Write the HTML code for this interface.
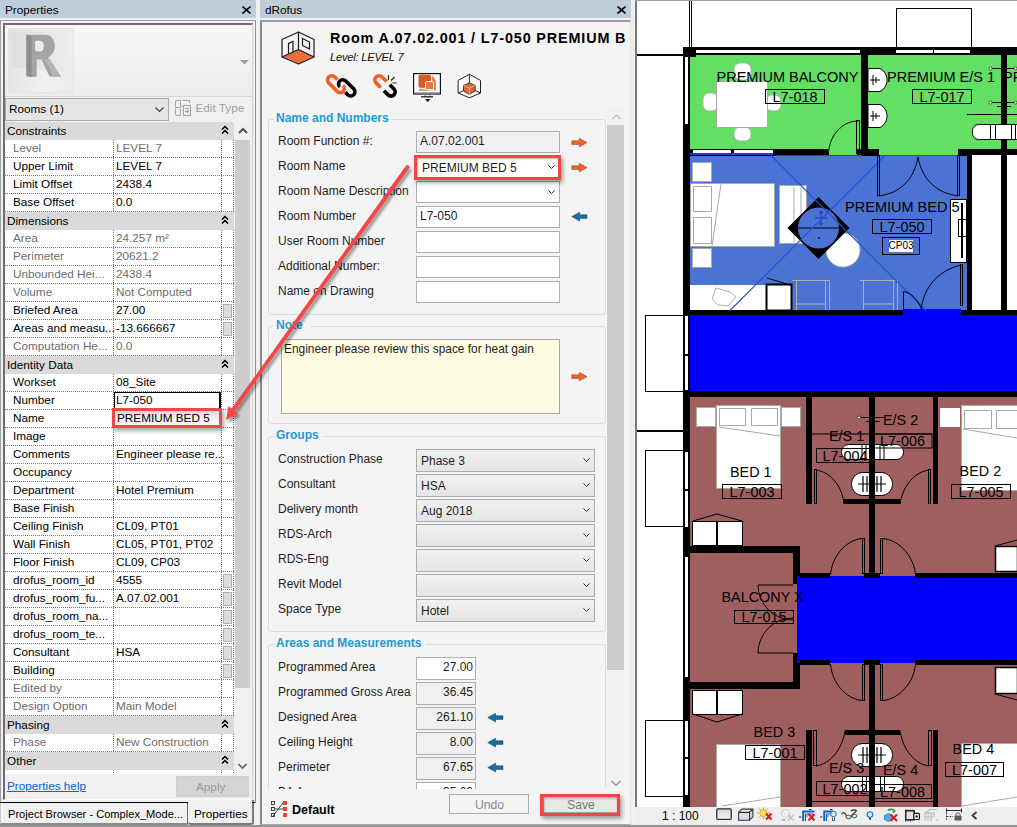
<!DOCTYPE html><html><head><meta charset="utf-8"><style>
html,body{margin:0;padding:0;}
body{width:1017px;height:827px;position:relative;overflow:hidden;background:#f0f0f0;font-family:"Liberation Sans",sans-serif;font-size:11.75px;color:#000;}
.t{position:absolute;white-space:nowrap;line-height:14px;}
.tbar{position:absolute;height:18px;background:#bfcddb;}
.ttl{position:absolute;top:3px;white-space:nowrap;line-height:14px;font-size:11.75px;color:#000;}
.row{position:absolute;left:5px;width:229px;height:18px;background:#fff;
 background-image:
  linear-gradient(to right,#7a7a7a 50%,transparent 50%),
  linear-gradient(to bottom,#7a7a7a 50%,transparent 50%),
  linear-gradient(to bottom,#7a7a7a 50%,transparent 50%),
  linear-gradient(to bottom,#7a7a7a 50%,transparent 50%);
 background-size:2px 1px,1px 2px,1px 2px,1px 2px;
 background-repeat:repeat-x,repeat-y,repeat-y,repeat-y;
 background-position:0 17px,108px 0,216px 0,228px 0;}
</style></head><body>
<div class="tbar" style="left:0;top:0;width:256px;"><span class="ttl" style="left:5px">Properties</span><svg style="position:absolute;left:242px;top:6px" width="9" height="8" viewBox="0 0 9 8"><path d="M0.5 0.5L8.5 7.5M8.5 0.5L0.5 7.5" stroke="#000" stroke-width="1.6"/></svg></div>
<div style="position:absolute;left:0;top:20px;width:256px;height:783px;border-top:1px solid #a0a0a0;border-left:1px solid #a0a0a0;border-right:1px solid #909090;box-sizing:border-box;background:#f0f0f0"></div>
<div style="position:absolute;left:3px;top:23px;width:250px;height:777px;border-top:2px solid #6e6e6e;border-left:2px solid #6e6e6e;border-right:1px solid #d4d4d4;border-bottom:1px solid #fafafa;box-sizing:border-box;background:#f0f0f0"></div>
<div style="position:absolute;left:5px;top:25px;width:247px;height:71px;background:linear-gradient(#f7f7f7,#ececec);border-bottom:1px solid #d6d6d6"></div>
<div style="position:absolute;left:8px;top:28px;width:66px;height:65px;background:linear-gradient(100deg,#e2e2e2,#f0f0f0 60%,#ebebeb);border:1px solid #e4e4e4;box-sizing:border-box"></div>
<svg style="position:absolute;left:0;top:0" width="80" height="96" viewBox="0 0 80 96"><defs><linearGradient id="rg" x1="0" y1="0" x2="1" y2="0"><stop offset="0" stop-color="#dedede"/><stop offset="1" stop-color="#ececec"/></linearGradient></defs><path d="M11.6 32H69.5V72.7L11.6 67Z" fill="url(#rg)"/><path d="M26.4 34.8H45.5C51 34.8 54.8 39.5 54.8 46.4C54.8 51.5 51.5 55.5 48 57.5L61 76.5H49.5L41.5 59.5H36.7V76.7L31.5 77L26.4 76Z" fill="#a4a4a4"/><path d="M26.4 34.8L31.5 36V77L26.4 76Z" fill="#8c8c8c"/><path d="M35.1 41.5C36 40.8 38 40.8 40 40.8C42.5 40.8 43.8 43 43.8 46C43.8 49.5 42.5 51.5 40 51.5C37.5 51.5 35.5 51 35.1 50Z" fill="#ededed"/><path d="M41.5 59.5C45 60 47 63 49.5 68L53 76.5H61L50 59.5" fill="#b4b4b4"/></svg>
<svg style="position:absolute;left:240px;top:60px" width="10" height="5"><path d="M0 0H9L4.5 4.5Z" fill="#9a9a9a"/></svg>
<div style="position:absolute;left:5px;top:98px;width:164px;height:23px;background:#e5e5e5;border:1px solid #acacac;box-sizing:border-box"></div>
<span class="t" style="left:9px;top:102px">Rooms (1)</span>
<svg style="position:absolute;left:155px;top:107px" width="9" height="6"><path d="M0.5 0.5L4.5 4.5L8.5 0.5" stroke="#404040" fill="none" stroke-width="1.1"/></svg>
<svg style="position:absolute;left:174px;top:99px" width="18" height="18" viewBox="0 0 18 18"><g fill="none" stroke="#a6a6a6" stroke-width="1.1"><path d="M6 1.5H3C2 1.5 1.5 2 1.5 3V8.5M6.5 1.5V7.5M1.5 9.5V15C1.5 16 2 16.5 3 16.5H6.5M6.5 9.5V16M8.5 1.5H15.5V4M8.5 7.5H6.5M1.5 8.5H6.5"/><rect x="9.5" y="6.5" width="7" height="10"/><path d="M11 9.5H15M11 12.5H14M13 11L14.5 12.5L13 14"/></g></svg>
<span class="t" style="left:195.5px;top:101px;color:#a0a0a0">Edit Type</span>
<div style="position:absolute;left:5px;top:122px;width:229px;height:18px;background:#dadada"></div>
<span class="t" style="left:7px;top:124px">Constraints</span>
<svg style="position:absolute;left:221px;top:125px" width="8" height="10" viewBox="0 0 8 10"><path d="M1 4.5L4 1.5L7 4.5M1 8.5L4 5.5L7 8.5" stroke="#000" stroke-width="1.5" fill="none"/></svg>
<div class="row" style="top:140px"></div>
<span class="t" style="left:13px;top:141px;color:#6d6d6d">Level</span>
<span class="t" style="left:116px;top:141px;color:#6d6d6d">LEVEL 7</span>
<div class="row" style="top:158px"></div>
<span class="t" style="left:13px;top:159px;color:#000">Upper Limit</span>
<span class="t" style="left:116px;top:159px;color:#000">LEVEL 7</span>
<div class="row" style="top:176px"></div>
<span class="t" style="left:13px;top:177px;color:#000">Limit Offset</span>
<span class="t" style="left:116px;top:177px;color:#000">2438.4</span>
<div class="row" style="top:194px"></div>
<span class="t" style="left:13px;top:195px;color:#000">Base Offset</span>
<span class="t" style="left:116px;top:195px;color:#000">0.0</span>
<div style="position:absolute;left:5px;top:212px;width:229px;height:18px;background:#dadada"></div>
<span class="t" style="left:7px;top:214px">Dimensions</span>
<svg style="position:absolute;left:221px;top:215px" width="8" height="10" viewBox="0 0 8 10"><path d="M1 4.5L4 1.5L7 4.5M1 8.5L4 5.5L7 8.5" stroke="#000" stroke-width="1.5" fill="none"/></svg>
<div class="row" style="top:230px"></div>
<span class="t" style="left:13px;top:231px;color:#6d6d6d">Area</span>
<span class="t" style="left:116px;top:231px;color:#6d6d6d">24.257 m²</span>
<div class="row" style="top:248px"></div>
<span class="t" style="left:13px;top:249px;color:#6d6d6d">Perimeter</span>
<span class="t" style="left:116px;top:249px;color:#6d6d6d">20621.2</span>
<div class="row" style="top:266px"></div>
<span class="t" style="left:13px;top:267px;color:#6d6d6d">Unbounded Hei...</span>
<span class="t" style="left:116px;top:267px;color:#6d6d6d">2438.4</span>
<div class="row" style="top:284px"></div>
<span class="t" style="left:13px;top:285px;color:#6d6d6d">Volume</span>
<span class="t" style="left:116px;top:285px;color:#6d6d6d">Not Computed</span>
<div class="row" style="top:302px"></div>
<span class="t" style="left:13px;top:303px;color:#000">Briefed Area</span>
<span class="t" style="left:116px;top:303px;color:#000">27.00</span>
<div style="position:absolute;left:223px;top:304px;width:9px;height:14px;background:#dcdcdc;border:1px solid #b0b0b0;box-sizing:border-box"></div>
<div class="row" style="top:320px"></div>
<span class="t" style="left:13px;top:321px;color:#000">Areas and measu...</span>
<span class="t" style="left:116px;top:321px;color:#000">-13.666667</span>
<div style="position:absolute;left:223px;top:322px;width:9px;height:14px;background:#dcdcdc;border:1px solid #b0b0b0;box-sizing:border-box"></div>
<div class="row" style="top:338px"></div>
<span class="t" style="left:13px;top:339px;color:#6d6d6d">Computation He...</span>
<span class="t" style="left:116px;top:339px;color:#6d6d6d">0.0</span>
<div style="position:absolute;left:5px;top:356px;width:229px;height:18px;background:#dadada"></div>
<span class="t" style="left:7px;top:358px">Identity Data</span>
<svg style="position:absolute;left:221px;top:359px" width="8" height="10" viewBox="0 0 8 10"><path d="M1 4.5L4 1.5L7 4.5M1 8.5L4 5.5L7 8.5" stroke="#000" stroke-width="1.5" fill="none"/></svg>
<div class="row" style="top:374px"></div>
<span class="t" style="left:13px;top:375px;color:#000">Workset</span>
<span class="t" style="left:116px;top:375px;color:#000">08_Site</span>
<div class="row" style="top:392px"></div>
<span class="t" style="left:13px;top:393px;color:#000">Number</span>
<span class="t" style="left:116px;top:393px;color:#000">L7-050</span>
<div class="row" style="top:410px"></div>
<span class="t" style="left:13px;top:411px;color:#000">Name</span>
<span class="t" style="left:116px;top:411px;color:#000">PREMIUM BED 5</span>
<div class="row" style="top:428px"></div>
<span class="t" style="left:13px;top:429px;color:#000">Image</span>
<div class="row" style="top:446px"></div>
<span class="t" style="left:13px;top:447px;color:#000">Comments</span>
<span class="t" style="left:116px;top:447px;color:#000">Engineer please re...</span>
<div class="row" style="top:464px"></div>
<span class="t" style="left:13px;top:465px;color:#000">Occupancy</span>
<div class="row" style="top:482px"></div>
<span class="t" style="left:13px;top:483px;color:#000">Department</span>
<span class="t" style="left:116px;top:483px;color:#000">Hotel Premium</span>
<div class="row" style="top:500px"></div>
<span class="t" style="left:13px;top:501px;color:#000">Base Finish</span>
<div class="row" style="top:518px"></div>
<span class="t" style="left:13px;top:519px;color:#000">Ceiling Finish</span>
<span class="t" style="left:116px;top:519px;color:#000">CL09, PT01</span>
<div class="row" style="top:536px"></div>
<span class="t" style="left:13px;top:537px;color:#000">Wall Finish</span>
<span class="t" style="left:116px;top:537px;color:#000">CL05, PT01, PT02</span>
<div class="row" style="top:554px"></div>
<span class="t" style="left:13px;top:555px;color:#000">Floor Finish</span>
<span class="t" style="left:116px;top:555px;color:#000">CL09, CP03</span>
<div class="row" style="top:572px"></div>
<span class="t" style="left:13px;top:573px;color:#000">drofus_room_id</span>
<span class="t" style="left:116px;top:573px;color:#000">4555</span>
<div style="position:absolute;left:223px;top:574px;width:9px;height:14px;background:#dcdcdc;border:1px solid #b0b0b0;box-sizing:border-box"></div>
<div class="row" style="top:590px"></div>
<span class="t" style="left:13px;top:591px;color:#000">drofus_room_fu...</span>
<span class="t" style="left:116px;top:591px;color:#000">A.07.02.001</span>
<div style="position:absolute;left:223px;top:592px;width:9px;height:14px;background:#dcdcdc;border:1px solid #b0b0b0;box-sizing:border-box"></div>
<div class="row" style="top:608px"></div>
<span class="t" style="left:13px;top:609px;color:#000">drofus_room_na...</span>
<div style="position:absolute;left:223px;top:610px;width:9px;height:14px;background:#dcdcdc;border:1px solid #b0b0b0;box-sizing:border-box"></div>
<div class="row" style="top:626px"></div>
<span class="t" style="left:13px;top:627px;color:#000">drofus_room_te...</span>
<div style="position:absolute;left:223px;top:628px;width:9px;height:14px;background:#dcdcdc;border:1px solid #b0b0b0;box-sizing:border-box"></div>
<div class="row" style="top:644px"></div>
<span class="t" style="left:13px;top:645px;color:#000">Consultant</span>
<span class="t" style="left:116px;top:645px;color:#000">HSA</span>
<div style="position:absolute;left:223px;top:646px;width:9px;height:14px;background:#dcdcdc;border:1px solid #b0b0b0;box-sizing:border-box"></div>
<div class="row" style="top:662px"></div>
<span class="t" style="left:13px;top:663px;color:#000">Building</span>
<div style="position:absolute;left:223px;top:664px;width:9px;height:14px;background:#dcdcdc;border:1px solid #b0b0b0;box-sizing:border-box"></div>
<div class="row" style="top:680px"></div>
<span class="t" style="left:13px;top:681px;color:#6d6d6d">Edited by</span>
<div class="row" style="top:698px"></div>
<span class="t" style="left:13px;top:699px;color:#6d6d6d">Design Option</span>
<span class="t" style="left:116px;top:699px;color:#6d6d6d">Main Model</span>
<div style="position:absolute;left:5px;top:716px;width:229px;height:18px;background:#dadada"></div>
<span class="t" style="left:7px;top:718px">Phasing</span>
<svg style="position:absolute;left:221px;top:719px" width="8" height="10" viewBox="0 0 8 10"><path d="M1 4.5L4 1.5L7 4.5M1 8.5L4 5.5L7 8.5" stroke="#000" stroke-width="1.5" fill="none"/></svg>
<div class="row" style="top:734px"></div>
<span class="t" style="left:13px;top:735px;color:#6d6d6d">Phase</span>
<span class="t" style="left:116px;top:735px;color:#6d6d6d">New Construction</span>
<div style="position:absolute;left:5px;top:752px;width:229px;height:18px;background:#dadada"></div>
<span class="t" style="left:7px;top:754px">Other</span>
<svg style="position:absolute;left:221px;top:755px" width="8" height="10" viewBox="0 0 8 10"><path d="M1 4.5L4 1.5L7 4.5M1 8.5L4 5.5L7 8.5" stroke="#000" stroke-width="1.5" fill="none"/></svg>
<div class="row" style="top:770px"></div>
<span class="t" style="left:13px;top:771px;color:#6d6d6d">Fire Rating</span>
<div style="position:absolute;left:5px;top:774px;width:247px;height:25px;background:#f0f0f0"></div>
<div style="position:absolute;left:234px;top:122px;width:17px;height:653px;background:#f0f0f0"></div>
<div style="position:absolute;left:235px;top:140px;width:15px;height:548px;background:#cdcdcd"></div>
<svg style="position:absolute;left:238px;top:127px" width="10" height="7"><path d="M1 6L5 2L9 6" stroke="#505050" fill="none" stroke-width="2"/></svg>
<svg style="position:absolute;left:238px;top:763px" width="9" height="6"><path d="M0.5 1L4.5 5L8.5 1" stroke="#606060" fill="none" stroke-width="1.6"/></svg>
<span class="t" style="left:7px;top:779px;color:#0066cc;text-decoration:underline">Properties help</span>
<div style="position:absolute;left:176px;top:776px;width:73px;height:21px;background:#d4d4d4;border:1px solid #cfcfcf;box-sizing:border-box"></div>
<span class="t" style="left:196px;top:780px;color:#9a9a9a">Apply</span>
<div style="position:absolute;left:0;top:802px;width:188px;height:1px;background:#000"></div>
<div style="position:absolute;left:0;top:803px;width:188px;height:22px;border-left:1px solid #c8c8c8;border-bottom:2px solid #8a8a8a;border-right:1px solid #6a6a6a;box-sizing:border-box;background:#f0f0f0"></div>
<div style="position:absolute;left:2px;top:803px;width:1px;height:19px;background:#fff"></div>
<span class="t" style="left:8px;top:807px;font-size:11.1px">Project Browser - Complex_Mode...</span>
<div style="position:absolute;left:188px;top:800px;width:66px;height:25px;border-right:2px solid #7a7a7a;border-bottom:2px solid #7a7a7a;box-sizing:border-box;background:#f0f0f0;border-radius:0 0 3px 3px"></div>
<div style="position:absolute;left:252px;top:802px;width:3px;height:1px;background:#000"></div>
<span class="t" style="left:194px;top:807px">Properties</span>
<div class="tbar" style="left:260px;top:0;width:371px;"><span class="ttl" style="left:5px">dRofus</span><svg style="position:absolute;left:357px;top:6px" width="9" height="8" viewBox="0 0 9 8"><path d="M0.5 0.5L8.5 7.5M8.5 0.5L0.5 7.5" stroke="#000" stroke-width="1.6"/></svg></div>
<div style="position:absolute;left:260px;top:20px;width:371px;height:806px;background:#f4f4f4;border-left:2px solid #8a8a8a;border-top:2px solid #9a9a9a;border-right:1px solid #e4e4e4;border-bottom:2px solid #a8a8a8;box-sizing:border-box"></div>
<svg style="position:absolute;left:281px;top:31px" width="34" height="34" viewBox="0 0 34 34"><path d="M2 26L17.5 18.5L32 26L17.5 32.5Z" fill="#ee6c35"/><path d="M17.5 1L1 8.5V26L17.5 33L33 26V8.5Z M17.5 1V18.5 M1 26L17.5 18.5L33 26" fill="none" stroke="#1a1a1a" stroke-width="1.2" stroke-linejoin="round"/><path d="M7.5 23V12.5L12 10.5V21" fill="none" stroke="#1a1a1a" stroke-width="1.2"/><path d="M21.5 7.5L28.5 11V18L21.5 14.5Z" fill="none" stroke="#1a1a1a" stroke-width="1.2"/></svg>
<div style="position:absolute;left:329px;top:29px;width:296px;height:20px;overflow:hidden"><span class="t" style="left:1px;top:2px;font-weight:bold;font-size:14.4px;letter-spacing:0.85px;color:#000">Room A.07.02.001 / L7-050 PREMIUM BED 5</span></div>
<span class="t" style="left:330px;top:50px;font-style:italic;font-size:11.2px;letter-spacing:-0.25px;color:#111">Level: LEVEL 7</span>
<svg style="position:absolute;left:0;top:0;overflow:visible" width="1" height="1"><g transform="translate(331.7 79.9) rotate(45)" fill="none" stroke-width="3.6"><path d="M3.8 -4.2H0A4.2 4.2 0 0 0 0 4.2H12A4.2 4.2 0 0 0 12 -4.2" stroke="#ee6024"/></g><g transform="translate(342.8 83.9) rotate(45)" fill="none" stroke-width="3.6"><path d="M7.8 4.2H11.2A4.2 4.2 0 0 0 11.2 -4.2H0A4.2 4.2 0 0 0 0 4.2" stroke="#000"/></g><g transform="translate(379 79.9) rotate(45)" fill="none" stroke-width="3.6"><path d="M6.6 -4.2H0A4.2 4.2 0 0 0 0 4.2H6.6" stroke="#ee6024"/></g><g transform="translate(391 91.9) rotate(45)" fill="none" stroke-width="3.6"><path d="M-5.8 -4.2H0A4.2 4.2 0 0 1 0 4.2H-5.8" stroke="#000"/></g><path d="M388.5 75V80M391 80.5L394.5 77" stroke="#222" stroke-width="1.1"/><path d="M392.5 83H396.5" stroke="#555" stroke-width="1.3"/><rect x="413.6" y="73.6" width="26.8" height="20.4" fill="#fff" stroke="#111" stroke-width="1.2"/><path d="M414 93.2H440" stroke="#777" stroke-width="1.6"/><rect x="418.5" y="74.8" width="12.6" height="13" rx="1.8" fill="#d65a24"/><path d="M432 75.5L436 80.5V91L432 88Z" fill="#e08050"/><path d="M420 88.5L432 91H418Z" fill="#e89070"/><rect x="425.5" y="81.5" width="8" height="8" rx="1" fill="#e07848" stroke="#fff" stroke-width="0.9"/><path d="M425 95.5V96.5M430 95.5V96.5" stroke="#333" stroke-width="1"/><path d="M421 96.8H433" stroke="#111" stroke-width="1.2"/><path d="M425 99H430.5L427.75 102Z" fill="#111"/><path d="M469.4 74.3L458.1 80.4V93L469.4 97.8L480.5 93V80.4Z" fill="#fff" stroke="#222" stroke-width="1"/><path d="M469.4 74.3V83M458.1 93L464 90.5M480.5 93L475 90.5" stroke="#222" stroke-width="1"/><path d="M469.4 82.8L463.5 85.5V91L469.4 94.3L475.2 91V85.5Z" fill="#e0662e" stroke="#222" stroke-width="0.8"/><path d="M463.8 85.6L469.4 88.2L475 85.6M469.4 88.2V94" stroke="#f6c8a8" stroke-width="0.8" fill="none"/></svg>
<div style="position:absolute;left:262px;top:106px;width:345px;height:683px;overflow:hidden">
<div style="position:absolute;left:6px;top:13px;width:338px;height:196px;border:1px solid #d5dfe5;border-radius:3px;box-sizing:border-box"></div><div style="position:absolute;left:12px;top:10px;width:114px;height:6px;background:#f4f4f4"></div><span class="t" style="left:14px;top:5px;font-weight:bold;font-size:12px;color:#1e9ad6">Name and Numbers</span>
<span class="t" style="left:16px;top:28px;color:#1e1e1e;font-size:12px">Room Function #:</span>
<span class="t" style="left:16px;top:53px;color:#1e1e1e;font-size:12px">Room Name</span>
<span class="t" style="left:16px;top:78px;color:#1e1e1e;font-size:12px">Room Name Description</span>
<span class="t" style="left:16px;top:103px;color:#1e1e1e;font-size:12px">Room Number</span>
<span class="t" style="left:16px;top:128px;color:#1e1e1e;font-size:12px">User Room Number</span>
<span class="t" style="left:16px;top:153px;color:#1e1e1e;font-size:12px">Additional Number:</span>
<span class="t" style="left:16px;top:178px;color:#1e1e1e;font-size:12px">Name on Drawing</span>
<div style="position:absolute;left:154px;top:25px;width:144px;height:22px;background:#f0f0f0;border:1px solid #abadb3;box-sizing:border-box"></div><span class="t" style="left:158px;top:28px;color:#1e1e1e;font-size:12px">A.07.02.001</span>
<div style="position:absolute;left:154px;top:50px;width:144px;height:22px;background:#fff;border:1px solid #abadb3;box-sizing:border-box"></div>
<span class="t" style="left:160px;top:55px;color:#1e1e1e;font-size:12px">PREMIUM BED 5</span>
<svg style="position:absolute;left:286px;top:59px" width="7" height="5" viewBox="0 0 7 5"><path d="M0.5 0.5L3.5 3.5L6.5 0.5" stroke="#333" fill="none" stroke-width="1"/></svg>
<div style="position:absolute;left:154px;top:75px;width:144px;height:22px;background:#fff;border:1px solid #abadb3;box-sizing:border-box"></div>
<svg style="position:absolute;left:286px;top:84px" width="7" height="5" viewBox="0 0 7 5"><path d="M0.5 0.5L3.5 3.5L6.5 0.5" stroke="#333" fill="none" stroke-width="1"/></svg>
<div style="position:absolute;left:154px;top:100px;width:144px;height:22px;background:#fff;border:1px solid #abadb3;box-sizing:border-box"></div><span class="t" style="left:158px;top:103px;color:#1e1e1e;font-size:12px">L7-050</span>
<div style="position:absolute;left:154px;top:125px;width:144px;height:22px;background:#fff;border:1px solid #abadb3;box-sizing:border-box"></div>
<div style="position:absolute;left:154px;top:150px;width:144px;height:22px;background:#fff;border:1px solid #abadb3;box-sizing:border-box"></div>
<div style="position:absolute;left:154px;top:175px;width:144px;height:22px;background:#fff;border:1px solid #abadb3;box-sizing:border-box"></div>
<svg style="position:absolute;left:309px;top:32px" width="17" height="10" viewBox="0 0 17 10"><path d="M0.8 2.8H8.2V0.2L16 4.6L8.2 9V6.4H0.8Z" fill="#f0632a" stroke="#8a3a1a" stroke-width="0.5"/></svg>
<svg style="position:absolute;left:309px;top:57px" width="17" height="10" viewBox="0 0 17 10"><path d="M0.8 2.8H8.2V0.2L16 4.6L8.2 9V6.4H0.8Z" fill="#f0632a" stroke="#8a3a1a" stroke-width="0.5"/></svg>
<svg style="position:absolute;left:309px;top:106px" width="17" height="10" viewBox="0 0 17 10"><path d="M16 2.8H8.6V0.2L0.8 4.6L8.6 9V6.4H16Z" fill="#1a70a0" stroke="#0a3a5a" stroke-width="0.5"/></svg>
<div style="position:absolute;left:6px;top:220px;width:338px;height:98px;border:1px solid #d5dfe5;border-radius:3px;box-sizing:border-box"></div><div style="position:absolute;left:12px;top:217px;width:36px;height:6px;background:#f4f4f4"></div><span class="t" style="left:14px;top:212px;font-weight:bold;font-size:12px;color:#1e9ad6">Note</span>
<div style="position:absolute;left:19px;top:233px;width:279px;height:75px;background:#fffde1;border:1px solid #a9a9a9;box-sizing:border-box"></div>
<span class="t" style="left:22px;top:236px;color:#1e1e1e;font-size:11.9px">Engineer please review this space for heat gain</span>
<svg style="position:absolute;left:309px;top:266px" width="17" height="10" viewBox="0 0 17 10"><path d="M0.8 2.8H8.2V0.2L16 4.6L8.2 9V6.4H0.8Z" fill="#f0632a" stroke="#8a3a1a" stroke-width="0.5"/></svg>
<div style="position:absolute;left:6px;top:330px;width:338px;height:196px;border:1px solid #d5dfe5;border-radius:3px;box-sizing:border-box"></div><div style="position:absolute;left:12px;top:327px;width:50px;height:6px;background:#f4f4f4"></div><span class="t" style="left:14px;top:322px;font-weight:bold;font-size:12px;color:#1e9ad6">Groups</span>
<span class="t" style="left:16px;top:346px;color:#1e1e1e;font-size:12px">Construction Phase</span>
<div style="position:absolute;left:154px;top:343px;width:179px;height:23px;background:linear-gradient(#f0f0f0,#e5e5e5);border:1px solid #acacac;box-sizing:border-box"></div><span class="t" style="left:159px;top:348px;color:#1e1e1e;font-size:12px">Phase 3</span><svg style="position:absolute;left:321px;top:352px" width="7" height="5" viewBox="0 0 7 5"><path d="M0.5 0.5L3.5 3.5L6.5 0.5" stroke="#333" fill="none" stroke-width="1"/></svg>
<span class="t" style="left:16px;top:371px;color:#1e1e1e;font-size:12px">Consultant</span>
<div style="position:absolute;left:154px;top:368px;width:179px;height:23px;background:linear-gradient(#f0f0f0,#e5e5e5);border:1px solid #acacac;box-sizing:border-box"></div><span class="t" style="left:159px;top:373px;color:#1e1e1e;font-size:12px">HSA</span><svg style="position:absolute;left:321px;top:377px" width="7" height="5" viewBox="0 0 7 5"><path d="M0.5 0.5L3.5 3.5L6.5 0.5" stroke="#333" fill="none" stroke-width="1"/></svg>
<span class="t" style="left:16px;top:396px;color:#1e1e1e;font-size:12px">Delivery month</span>
<div style="position:absolute;left:154px;top:393px;width:179px;height:23px;background:linear-gradient(#f0f0f0,#e5e5e5);border:1px solid #acacac;box-sizing:border-box"></div><span class="t" style="left:159px;top:398px;color:#1e1e1e;font-size:12px">Aug 2018</span><svg style="position:absolute;left:321px;top:402px" width="7" height="5" viewBox="0 0 7 5"><path d="M0.5 0.5L3.5 3.5L6.5 0.5" stroke="#333" fill="none" stroke-width="1"/></svg>
<span class="t" style="left:16px;top:421px;color:#1e1e1e;font-size:12px">RDS-Arch</span>
<div style="position:absolute;left:154px;top:418px;width:179px;height:23px;background:linear-gradient(#f0f0f0,#e5e5e5);border:1px solid #acacac;box-sizing:border-box"></div><svg style="position:absolute;left:321px;top:427px" width="7" height="5" viewBox="0 0 7 5"><path d="M0.5 0.5L3.5 3.5L6.5 0.5" stroke="#333" fill="none" stroke-width="1"/></svg>
<span class="t" style="left:16px;top:446px;color:#1e1e1e;font-size:12px">RDS-Eng</span>
<div style="position:absolute;left:154px;top:443px;width:179px;height:23px;background:linear-gradient(#f0f0f0,#e5e5e5);border:1px solid #acacac;box-sizing:border-box"></div><svg style="position:absolute;left:321px;top:452px" width="7" height="5" viewBox="0 0 7 5"><path d="M0.5 0.5L3.5 3.5L6.5 0.5" stroke="#333" fill="none" stroke-width="1"/></svg>
<span class="t" style="left:16px;top:471px;color:#1e1e1e;font-size:12px">Revit Model</span>
<div style="position:absolute;left:154px;top:468px;width:179px;height:23px;background:linear-gradient(#f0f0f0,#e5e5e5);border:1px solid #acacac;box-sizing:border-box"></div><svg style="position:absolute;left:321px;top:477px" width="7" height="5" viewBox="0 0 7 5"><path d="M0.5 0.5L3.5 3.5L6.5 0.5" stroke="#333" fill="none" stroke-width="1"/></svg>
<span class="t" style="left:16px;top:496px;color:#1e1e1e;font-size:12px">Space Type</span>
<div style="position:absolute;left:154px;top:493px;width:179px;height:23px;background:linear-gradient(#f0f0f0,#e5e5e5);border:1px solid #acacac;box-sizing:border-box"></div><span class="t" style="left:159px;top:498px;color:#1e1e1e;font-size:12px">Hotel</span><svg style="position:absolute;left:321px;top:502px" width="7" height="5" viewBox="0 0 7 5"><path d="M0.5 0.5L3.5 3.5L6.5 0.5" stroke="#333" fill="none" stroke-width="1"/></svg>
<div style="position:absolute;left:6px;top:538px;width:338px;height:200px;border:1px solid #d5dfe5;border-radius:3px;box-sizing:border-box"></div><div style="position:absolute;left:12px;top:535px;width:152px;height:6px;background:#f4f4f4"></div><span class="t" style="left:14px;top:530px;font-weight:bold;font-size:12px;color:#1e9ad6">Areas and Measurements</span>
<span class="t" style="left:16px;top:554px;color:#1e1e1e;font-size:12px">Programmed Area</span>
<div style="position:absolute;left:154px;top:551px;width:60px;height:23px;background:#fff;border:1px solid #abadb3;box-sizing:border-box"></div><span class="t" style="right:134px;top:554px;color:#1e1e1e;font-size:12px">27.00</span>
<span class="t" style="left:16px;top:579px;color:#1e1e1e;font-size:12px">Programmed Gross Area</span>
<div style="position:absolute;left:154px;top:576px;width:60px;height:23px;background:#f0f0f0;border:1px solid #abadb3;box-sizing:border-box"></div><span class="t" style="right:134px;top:579px;color:#1e1e1e;font-size:12px">36.45</span>
<span class="t" style="left:16px;top:604px;color:#1e1e1e;font-size:12px">Designed Area</span>
<div style="position:absolute;left:154px;top:601px;width:60px;height:23px;background:#f0f0f0;border:1px solid #abadb3;box-sizing:border-box"></div><span class="t" style="right:134px;top:604px;color:#1e1e1e;font-size:12px">261.10</span>
<span class="t" style="left:16px;top:629px;color:#1e1e1e;font-size:12px">Ceiling Height</span>
<div style="position:absolute;left:154px;top:626px;width:60px;height:23px;background:#f0f0f0;border:1px solid #abadb3;box-sizing:border-box"></div><span class="t" style="right:134px;top:629px;color:#1e1e1e;font-size:12px">8.00</span>
<span class="t" style="left:16px;top:654px;color:#1e1e1e;font-size:12px">Perimeter</span>
<div style="position:absolute;left:154px;top:651px;width:60px;height:23px;background:#f0f0f0;border:1px solid #abadb3;box-sizing:border-box"></div><span class="t" style="right:134px;top:654px;color:#1e1e1e;font-size:12px">67.65</span>
<span class="t" style="left:16px;top:679px;color:#1e1e1e;font-size:12px">BA Area</span>
<div style="position:absolute;left:154px;top:676px;width:60px;height:23px;background:#fff;border:1px solid #abadb3;box-sizing:border-box"></div><span class="t" style="right:134px;top:679px;color:#1e1e1e;font-size:12px">35.00</span>
<svg style="position:absolute;left:225px;top:607px" width="17" height="10" viewBox="0 0 17 10"><path d="M16 2.8H8.6V0.2L0.8 4.6L8.6 9V6.4H16Z" fill="#1a70a0" stroke="#0a3a5a" stroke-width="0.5"/></svg>
<svg style="position:absolute;left:225px;top:632px" width="17" height="10" viewBox="0 0 17 10"><path d="M16 2.8H8.6V0.2L0.8 4.6L8.6 9V6.4H16Z" fill="#1a70a0" stroke="#0a3a5a" stroke-width="0.5"/></svg>
<svg style="position:absolute;left:225px;top:657px" width="17" height="10" viewBox="0 0 17 10"><path d="M16 2.8H8.6V0.2L0.8 4.6L8.6 9V6.4H16Z" fill="#1a70a0" stroke="#0a3a5a" stroke-width="0.5"/></svg>
</div>
<div style="position:absolute;left:607px;top:106px;width:17px;height:683px;background:#f0f0f0"></div>
<div style="position:absolute;left:607px;top:125px;width:17px;height:545px;background:#cdcdcd"></div>
<svg style="position:absolute;left:612px;top:114px" width="9" height="6"><path d="M0.5 5L4.5 1L8.5 5" stroke="#a0a0a0" fill="none" stroke-width="1"/></svg>
<svg style="position:absolute;left:611px;top:780px" width="11" height="7"><path d="M0.5 1L5 5.5L9.5 1" stroke="#909090" fill="none" stroke-width="1.2"/></svg>
<svg style="position:absolute;left:271px;top:801px" width="17" height="17" viewBox="0 0 17 17"><g fill="none" stroke="#333" stroke-width="0.9"><rect x="0.5" y="0.5" width="3" height="3"/><rect x="0.5" y="6.5" width="3" height="3"/><rect x="0.5" y="12.5" width="3" height="3"/><path d="M2 15L12 2M4 8H12"/></g><rect x="12" y="0" width="4" height="4" fill="#e8462a"/><rect x="12" y="6" width="4" height="4" fill="#e8462a"/><rect x="12" y="12" width="4" height="4" fill="#e8462a"/></svg>
<span class="t" style="left:292px;top:803px;font-weight:bold;font-size:12.5px">Default</span>
<div style="position:absolute;left:449px;top:794px;width:80px;height:20px;background:#f4f4f4;border:1px solid #adadad;box-sizing:border-box"></div>
<span class="t" style="left:475px;top:798px;color:#8a8a8a;font-size:12.2px">Undo</span>
<div style="position:absolute;left:543px;top:796px;width:75px;height:17px;background:#e8e8e8;border:1px solid #adadad;box-sizing:border-box"></div>
<span class="t" style="left:567px;top:798px;color:#7a7a7a;font-size:12.2px">Save</span>
<svg style="position:absolute;left:635px;top:0" width="382" height="827" viewBox="635 0 382 827" font-family="Liberation Sans, sans-serif">
<rect x="635" y="0" width="382" height="827" fill="#f0f0f0" />
<rect x="637" y="1" width="380" height="806" fill="#fff" />
<rect x="635" y="0" width="2" height="807" fill="#7a7a7a" />
<rect x="635" y="0" width="382" height="1" fill="#a0a0a0" />
<rect x="689" y="1" width="1" height="46" fill="#000" />
<rect x="691" y="1" width="1" height="46" fill="#000" />
<rect x="637" y="54" width="46" height="2" fill="#000" />
<rect x="896.5" y="8.5" width="75" height="39" fill="none" stroke="#000" stroke-width="1"/>
<rect x="690" y="55" width="171" height="95" fill="#63df63" />
<rect x="868" y="55" width="133" height="95" fill="#63df63" />
<rect x="1007" y="55" width="10" height="95" fill="#63df63" />
<rect x="690" y="155" width="277" height="155" fill="#4b73d4" />
<rect x="690" y="315" width="327" height="76" fill="#0000ff" />
<rect x="690" y="397" width="327" height="410" fill="#9f5f5f" />
<rect x="645.5" y="315.5" width="38" height="76" fill="none" stroke="#000" stroke-width="1"/>
<rect x="637" y="430" width="46" height="2" fill="#000" />
<rect x="645.5" y="450.5" width="38" height="76" fill="none" stroke="#000" stroke-width="1"/>
<rect x="645.5" y="720.5" width="38" height="76" fill="none" stroke="#000" stroke-width="1"/>
<rect x="683" y="47" width="334" height="2" fill="#000" />
<rect x="683" y="53" width="334" height="2" fill="#000" />
<rect x="683" y="49" width="1" height="1" fill="#000" />
<rect x="696" y="49" width="164" height="1" fill="#000" />
<rect x="683" y="47" width="13" height="10" fill="#000" />
<rect x="860" y="47" width="36" height="8" fill="#000" />
<rect x="970" y="47" width="47" height="8" fill="#000" />
<rect x="896" y="49" width="74" height="1" fill="#000" />
<rect x="933" y="48" width="1" height="6" fill="#000" />
<rect x="683" y="47" width="7" height="760" fill="#000" />
<rect x="685" y="57" width="3" height="67" fill="#fff" />
<rect x="685" y="316" width="3" height="38" fill="#fff" />
<rect x="685" y="356" width="3" height="34" fill="#fff" />
<rect x="685" y="452" width="3" height="37" fill="#fff" />
<rect x="685" y="491" width="3" height="36" fill="#fff" />
<rect x="685" y="557" width="3" height="120" fill="#fff" />
<rect x="685" y="721" width="3" height="36" fill="#fff" />
<rect x="685" y="759" width="3" height="36" fill="#fff" />
<rect x="861" y="47" width="7" height="108" fill="#000" />
<rect x="1001" y="47" width="6" height="268" fill="#000" />
<rect x="683" y="149" width="284" height="7" fill="#000" />
<rect x="693" y="150" width="38" height="3" fill="#fff" />
<rect x="734" y="150" width="39" height="3" fill="#fff" />
<rect x="690" y="153" width="83" height="2" fill="#2040c0" />
<rect x="776" y="155" width="86" height="1" fill="#2040c0" />
<rect x="879" y="149" width="79" height="6" fill="#63df63" />
<rect x="879" y="155" width="79" height="1" fill="#2a50d0" />
<rect x="828" y="149" width="29" height="6" fill="#63df63" />
<rect x="967" y="149" width="50" height="6" fill="#000" />
<rect x="967" y="150" width="5" height="165" fill="#000" />
<rect x="683" y="310" width="334" height="5" fill="#000" />
<rect x="903" y="309" width="58" height="6" fill="#0000ff" />
<rect x="683" y="391" width="334" height="6" fill="#000" />
<rect x="806" y="397" width="6" height="107" fill="#000" />
<rect x="869" y="397" width="6" height="410" fill="#000" />
<rect x="933" y="397" width="5" height="107" fill="#000" />
<rect x="844" y="499" width="56" height="5" fill="#000" />
<rect x="690" y="546" width="110" height="7" fill="#000" />
<rect x="793" y="546" width="7" height="38" fill="#000" />
<rect x="793" y="653" width="7" height="36" fill="#000" />
<rect x="690" y="682" width="110" height="7" fill="#000" />
<rect x="797" y="576" width="220" height="87" fill="#0000ff" />
<rect x="800" y="573" width="30" height="5" fill="#000" />
<rect x="864" y="573" width="16" height="5" fill="#000" />
<rect x="915" y="573" width="102" height="5" fill="#000" />
<rect x="800" y="660" width="30" height="5" fill="#000" />
<rect x="864" y="660" width="16" height="5" fill="#000" />
<rect x="915" y="660" width="102" height="5" fill="#000" />
<rect x="806" y="730" width="6" height="77" fill="#000" />
<rect x="933" y="730" width="5" height="77" fill="#000" />
<rect x="845" y="730" width="55" height="5" fill="#000" />
<rect x="811" y="801" width="122" height="1" fill="#000" />
<rect x="734" y="63" width="17" height="17" rx="6" fill="#fff" stroke="#b0b0b0" stroke-width="1"/>
<rect x="703" y="93" width="15" height="18" rx="6" fill="#fff" stroke="#b0b0b0" stroke-width="1"/>
<rect x="766" y="95" width="15" height="16" rx="6" fill="#fff" stroke="#b0b0b0" stroke-width="1"/>
<rect x="734" y="127" width="17" height="14" rx="6" fill="#fff" stroke="#b0b0b0" stroke-width="1"/>
<rect x="716.5" y="81.5" width="51" height="46" fill="#fff" stroke="#a8a8a8"/>
<path d="M828.5 155C828.5 136 842 121 858 121" fill="none" stroke="#000" stroke-width="1"/>
<rect x="856.5" y="120.5" width="3" height="33" fill="none" stroke="#000" stroke-width="1"/>
<path d="M868 68.5H880C885 71 887 76 887 80C887 84 885 89 880 91.5H868Z" fill="#fff" stroke="#000" stroke-width="1"/>
<path d="M870 80H880M873 75V85M876 77V83" fill="none" stroke="#000" stroke-width="1"/>
<path d="M868 104.5H880C885 107 887 112 887 116C887 120 885 125 880 127.5H868Z" fill="#fff" stroke="#000" stroke-width="1"/>
<path d="M870 116H880M873 111V121M876 113V119" fill="none" stroke="#000" stroke-width="1"/>
<path d="M990 68.5H1017M990 102.5H1017M997 106.5H1011M967 114.5H1017" fill="none" stroke="#000" stroke-width="1"/>
<circle cx="990.5" cy="68.5" r="1.5" fill="#fff" stroke="#000" stroke-width="0.6"/>
<circle cx="1015.5" cy="68.5" r="1.5" fill="#fff" stroke="#000" stroke-width="0.6"/>
<circle cx="990.5" cy="102.5" r="1.5" fill="#fff" stroke="#000" stroke-width="0.6"/>
<circle cx="1015.5" cy="102.5" r="1.5" fill="#fff" stroke="#000" stroke-width="0.6"/>
<rect x="972.5" y="124.5" width="50" height="15" rx="6" fill="#fff" stroke="#000"/>
<path d="M990.5 125V139M995.5 125V139M1011.5 125V139M1015.5 125V139" fill="none" stroke="#000" stroke-width="1"/>
<rect x="692.5" y="162.5" width="19" height="19" fill="#fff" stroke="#a8a8a8" stroke-width="1"/>
<rect x="692.5" y="248.5" width="19" height="19" fill="#fff" stroke="#a8a8a8" stroke-width="1"/>
<rect x="690.5" y="183.5" width="84" height="63" fill="#fff" stroke="#a8a8a8" stroke-width="1"/>
<path d="M693.5 186.5H711.5V211.5H693.5ZM693.5 217.5H711.5V243.5H693.5ZM721 184L712 246" fill="none" stroke="#a8a8a8" stroke-width="1"/>
<rect x="779.5" y="185.5" width="27" height="58" fill="#fff" stroke="#a8a8a8" stroke-width="1"/>
<path d="M794 187V242M801 187V242" fill="none" stroke="#a8a8a8" stroke-width="1"/>
<circle cx="843" cy="250" r="17" fill="#fff" stroke="#b8b8b8"/>
<path d="M818.5 198L848.5 228L818.5 258L788.5 228Z" fill="#000" stroke="#000" stroke-width="1.5"/>
<circle cx="818.5" cy="228" r="20.5" fill="#4b73d4"/>
<path d="M790 228H847" fill="none" stroke="#000" stroke-width="1.2"/>
<path d="M818 256.5H819" fill="none" stroke="#000" stroke-width="1"/>
<path d="M818 238H820" fill="none" stroke="#000" stroke-width="1.2"/>
<path d="M821 211V225M815 218H828M819 213L821 211L823 213M819 223L821 225L823 223" fill="none" stroke="#2a4ab0" stroke-width="1.3"/>
<rect x="690" y="285" width="76" height="25" fill="#fff" />
<path d="M730 292L736 297L728 306L718 305L712 299L716 288Z" fill="#fff" stroke="#b0b0b0"/>
<rect x="766.5" y="284.5" width="25" height="26" fill="#fff" stroke="#000" stroke-width="2"/>
<path d="M767 278L790 285" fill="none" stroke="#000" stroke-width="1"/>
<path d="M792.5 280.5H829.5V310M796.5 280.5V310M825.5 280.5V310M796 304H826" fill="none" stroke="#b0b0b0" stroke-width="1"/>
<path d="M859.5 280.5H897.5V310M863.5 280.5V310M893.5 280.5V310M863 304H894" fill="none" stroke="#b0b0b0" stroke-width="1"/>
<path d="M771 155.5L926 310.5M730 310.5L885 155.5" fill="none" stroke="#1f4fd8" stroke-width="1.1"/>
<rect x="950.5" y="199.5" width="16" height="63" fill="#fff" stroke="#000" stroke-width="1"/>
<rect x="958.5" y="219.5" width="8" height="17" fill="none" stroke="#000" stroke-width="1"/>
<path d="M962 203V258" fill="none" stroke="#000" stroke-width="2"/>
<rect x="877.5" y="155.5" width="2" height="40" fill="none" stroke="#000" stroke-width="1"/>
<rect x="957.5" y="155.5" width="2" height="40" fill="none" stroke="#000" stroke-width="1"/>
<path d="M879 196C900 193 914 180 918 157M958 196C937 193 922 180 918 157" fill="none" stroke="#000" stroke-width="1"/>
<rect x="960.5" y="264.5" width="2" height="41" fill="none" stroke="#000" stroke-width="1"/>
<path d="M961 265C940 270 924 285 921 310M903.5 310V291.5C912 293 918 300 922 310" fill="none" stroke="#000" stroke-width="1"/>
<text x="716.5" y="81.6" font-size="14.5" fill="#000" text-anchor="start">PREMIUM BALCONY</text>
<rect x="765.5" y="89.5" width="59" height="14" fill="none" stroke="#000" stroke-width="1"/><text x="795.0" y="101.5" font-size="14.4" fill="#000" text-anchor="middle">L7-018</text>
<text x="887" y="81.6" font-size="14.5" fill="#000" text-anchor="start">PREMIUM E/S 1</text>
<text x="1003" y="81.6" font-size="14.5" fill="#000" text-anchor="start">PREMIUM</text>
<rect x="912.5" y="89.5" width="59" height="14" fill="none" stroke="#000" stroke-width="1"/><text x="942.0" y="101.5" font-size="14.4" fill="#000" text-anchor="middle">L7-017</text>
<text x="959.5" y="211.6" font-size="14.5" fill="#000" text-anchor="end">PREMIUM BED 5</text>
<rect x="872.5" y="219.5" width="59" height="14" fill="none" stroke="#000" stroke-width="1"/><text x="902.0" y="231.5" font-size="14.4" fill="#000" text-anchor="middle">L7-050</text>
<rect x="882.5" y="237.5" width="37" height="17" fill="none" stroke="#000" stroke-width="1"/>
<rect x="889" y="240" width="24" height="12" fill="#fff" />
<text x="901" y="248.8" font-size="10" fill="#000" text-anchor="middle">CP03</text>
<rect x="696.5" y="407.5" width="19" height="19" fill="#fff" stroke="#a8a8a8" stroke-width="1"/>
<rect x="781.5" y="407.5" width="19" height="19" fill="#fff" stroke="#a8a8a8" stroke-width="1"/>
<rect x="716.5" y="405.5" width="64" height="83" fill="#fff" stroke="#a8a8a8" stroke-width="1"/>
<path d="M719.5 408.5H745.5V425.5H719.5ZM751.5 408.5H777.5V425.5H751.5ZM719 427L780 436" fill="none" stroke="#a8a8a8" stroke-width="1"/>
<text x="730" y="476.7" font-size="14.4" fill="#000" text-anchor="start">BED 1</text>
<rect x="722.5" y="484.5" width="59" height="14" fill="none" stroke="#000" stroke-width="1"/><text x="752.0" y="496.5" font-size="14.4" fill="#000" text-anchor="middle">L7-003</text>
<rect x="940" y="408" width="20" height="19" fill="#fff"/>
<rect x="961.5" y="405.5" width="60" height="85" fill="#fff" stroke="#a8a8a8" stroke-width="1"/>
<path d="M964.5 410.5H991.5V428.5H964.5ZM996.5 410.5H1020V428.5H996.5ZM963 429L1017 438" fill="none" stroke="#a8a8a8" stroke-width="1"/>
<text x="959.6" y="476.4" font-size="14.4" fill="#000" text-anchor="start">BED 2</text>
<rect x="951.5" y="484.5" width="59" height="14" fill="none" stroke="#000" stroke-width="1"/><text x="981.0" y="496.5" font-size="14.4" fill="#000" text-anchor="middle">L7-005</text>
<path d="M811 434H932" fill="none" stroke="#000" stroke-width="1"/>
<rect x="841.5" y="444.5" width="62" height="15" rx="7" fill="#fff" stroke="#000"/>
<path d="M862 445V459M866 445V459M880 445V459M884 445V459" fill="none" stroke="#000" stroke-width="1"/>
<text x="829" y="440.6" font-size="14.4" fill="#000" text-anchor="start">E/S 1</text>
<rect x="816.5" y="448.5" width="57" height="14" fill="none" stroke="#000" stroke-width="1"/><text x="845.0" y="460.5" font-size="14.4" fill="#000" text-anchor="middle">L7-004</text>
<text x="883" y="425.2" font-size="14.4" fill="#000" text-anchor="start">E/S 2</text>
<path d="M859 417.5H884M866 421.5H880" fill="none" stroke="#000" stroke-width="1"/>
<circle cx="859" cy="417.5" r="1.5" fill="#fff" stroke="#000" stroke-width="0.6"/>
<rect x="873" y="434" width="59" height="14" fill="none" stroke="#000"/>
<text x="902.5" y="445.5" font-size="14.4" fill="#000" text-anchor="middle">L7-006</text>
<rect x="851.5" y="472.5" width="41" height="23" rx="11" fill="#fff" stroke="#000"/>
<path d="M863 476V492M867 476V492M877 476V492M881 476V492M858 484H886" fill="none" stroke="#000" stroke-width="1.2"/>
<rect x="814.5" y="469.5" width="2" height="34" fill="none" stroke="#000" stroke-width="1"/>
<path d="M816 470C830 472 842 485 844 504" fill="none" stroke="#000" stroke-width="1"/>
<rect x="928.5" y="469.5" width="2" height="34" fill="none" stroke="#000" stroke-width="1"/>
<path d="M929 470C915 472 903 485 900 504" fill="none" stroke="#000" stroke-width="1"/>
<rect x="862.5" y="538.5" width="2" height="35" fill="none" stroke="#000" stroke-width="1"/>
<path d="M830.5 575C832 556 846 540 862 538.5" fill="none" stroke="#000" stroke-width="1"/>
<rect x="880.5" y="538.5" width="2" height="35" fill="none" stroke="#000" stroke-width="1"/>
<path d="M915.5 575C914 556 899 540 883 538.5" fill="none" stroke="#000" stroke-width="1"/>
<rect x="862.5" y="664.5" width="2" height="36" fill="none" stroke="#000" stroke-width="1"/>
<path d="M830.5 664C832 683 846 699 862 700.5" fill="none" stroke="#000" stroke-width="1"/>
<rect x="880.5" y="664.5" width="2" height="36" fill="none" stroke="#000" stroke-width="1"/>
<path d="M915.5 664C914 683 899 699 883 700.5" fill="none" stroke="#000" stroke-width="1"/>
<rect x="692.5" y="521.5" width="50" height="24" fill="#fff" stroke="#000" stroke-width="1"/>
<rect x="716" y="521" width="2" height="25" fill="#000" />
<rect x="692.5" y="690.5" width="50" height="24" fill="#fff" stroke="#000" stroke-width="1"/>
<rect x="716" y="690" width="2" height="25" fill="#000" />
<path d="M693 521L717 514L742 521" fill="none" stroke="#000" stroke-width="1"/>
<path d="M693 714L717 722L742 714" fill="none" stroke="#000" stroke-width="1"/>
<rect x="995.5" y="546.5" width="22" height="25" fill="#fff" stroke="#000" stroke-width="1.5"/>
<rect x="995.5" y="667.5" width="22" height="26" fill="#fff" stroke="#000" stroke-width="1.5"/>
<path d="M995 546L1017 540M995 694L1017 700" fill="none" stroke="#000" stroke-width="1"/>
<text x="721.5" y="602" font-size="14.4" fill="#000" text-anchor="start">BALCONY X</text>
<rect x="734.5" y="610.5" width="59" height="13" fill="none" stroke="#000" stroke-width="1"/><text x="764.0" y="621.5" font-size="14.4" fill="#000" text-anchor="middle">L7-015</text>
<path d="M758 585H793M758 653H793" fill="none" stroke="#000" stroke-width="1"/>
<path d="M758 585A35 35 0 0 0 793 620M758 653A35 35 0 0 1 793 618" fill="none" stroke="#000" stroke-width="1"/>
<rect x="716.5" y="744.5" width="64" height="70" fill="#fff" stroke="#a8a8a8"/>
<path d="M722 806L780 797" fill="none" stroke="#a8a8a8" stroke-width="1"/>
<text x="753.6" y="737.4" font-size="14.4" fill="#000" text-anchor="start">BED 3</text>
<rect x="745.5" y="745.5" width="59" height="14" fill="none" stroke="#000" stroke-width="1"/><text x="775.0" y="757.5" font-size="14.4" fill="#000" text-anchor="middle">L7-001</text>
<rect x="961.5" y="743.5" width="60" height="70" fill="#fff" stroke="#a8a8a8"/>
<path d="M962 806L1017 797" fill="none" stroke="#a8a8a8" stroke-width="1"/>
<text x="952.6" y="753.6" font-size="14.4" fill="#000" text-anchor="start">BED 4</text>
<rect x="945.5" y="762.5" width="58" height="14" fill="none" stroke="#000" stroke-width="1"/><text x="974.5" y="774.5" font-size="14.4" fill="#000" text-anchor="middle">L7-007</text>
<rect x="851.5" y="743.5" width="41" height="23" rx="11" fill="#fff" stroke="#000"/>
<path d="M863 747V763M867 747V763M877 747V763M881 747V763M858 755H886" fill="none" stroke="#000" stroke-width="1.2"/>
<rect x="841.5" y="776.5" width="62" height="15" rx="7" fill="#fff" stroke="#000"/>
<path d="M862.5 777V791M866.5 777V791M880.5 777V791M884.5 777V791" fill="none" stroke="#000" stroke-width="1"/>
<text x="829" y="772.8" font-size="14.4" fill="#000" text-anchor="start">E/S 3</text>
<text x="883" y="775" font-size="14.4" fill="#000" text-anchor="start">E/S 4</text>
<rect x="816.5" y="781.5" width="57" height="14" fill="none" stroke="#000" stroke-width="1"/><text x="845.0" y="793.5" font-size="14.4" fill="#000" text-anchor="middle">L7-002</text>
<rect x="873.5" y="784.5" width="58" height="14" fill="none" stroke="#000" stroke-width="1"/><text x="902.5" y="796.5" font-size="14.4" fill="#000" text-anchor="middle">L7-008</text>
<rect x="813.5" y="730.5" width="3" height="35" fill="none" stroke="#000" stroke-width="1"/>
<path d="M816 766C830 764 842 750 845 731" fill="none" stroke="#000" stroke-width="1"/>
<rect x="928.5" y="730.5" width="3" height="35" fill="none" stroke="#000" stroke-width="1"/>
<path d="M929 766C915 764 903 750 900 731" fill="none" stroke="#000" stroke-width="1"/>
<rect x="869" y="397" width="6" height="181" fill="#000" />
<rect x="869" y="661" width="6" height="146" fill="#000" />
<rect x="637" y="807" width="380" height="18" fill="#eeeeee" />
<rect x="0" y="825" width="1017" height="2" fill="#8c8c8c" />
<text x="662" y="820" font-size="12" fill="#000" text-anchor="start">1 : 100</text>
</svg>
<svg style="position:absolute;left:712px;top:806px" width="270" height="19" viewBox="712 806 270 19">
<defs><linearGradient id="gb" x1="0" y1="0" x2="0" y2="1"><stop offset="0" stop-color="#d0d4dc"/><stop offset="1" stop-color="#f4f6f8"/></linearGradient></defs>
<rect x="716.8" y="808.8" width="14.4" height="10.6" rx="1" fill="url(#gb)" stroke="#2a2e36" stroke-width="1.3"/>
<path d="M738.7 812.3L741.8 809.2H752.8V816.8L749.5 820.2H738.7Z" fill="#f0f2f4" stroke="#2a2e36" stroke-width="1.2" stroke-linejoin="round"/>
<path d="M738.7 812.3H749.5V820.2M749.5 812.3L752.8 809.2" fill="none" stroke="#2a2e36" stroke-width="1.2"/><rect x="739.5" y="813" width="9.5" height="6.5" fill="#d8dce4"/><path d="M750 813L752.2 811V816.5L750 818.7Z" fill="#d0d4dc"/>
<g stroke="#d09010" stroke-width="0.9"><path d="M763.5 807.5V809.5M763.5 817V819M757 813H759M768 813H770M759 808.5L760.3 809.8M768 808.5L766.7 809.8M759 817.5L760.3 816.2"/></g><circle cx="763.5" cy="813" r="3.6" fill="#f8e060" stroke="#e0a020" stroke-width="0.8"/>
<path d="M766 813.5L771.5 819.5M771.5 813.5L766 819.5" stroke="#e01818" stroke-width="2"/>
<circle cx="785.5" cy="813.5" r="4" fill="none" stroke="#b8b8b8" stroke-width="1" stroke-dasharray="1.6 1"/><path d="M782 820H785" stroke="#999" stroke-width="1.3"/><path d="M788 815L793.5 820.5M793.5 815L788 820.5" stroke="#c0c0c0" stroke-width="1.4"/>
<path d="M803.2 821V811.5H814.5" stroke="#1060c8" stroke-width="2" fill="none"/><path d="M805.5 821V814H813" stroke="#1060c8" stroke-width="1" fill="none"/><path d="M799 817H801.5M809 809.5H811.5" stroke="#333" stroke-width="1.2"/><path d="M806 816H808" stroke="#e02020" stroke-width="1"/>
<path d="M808.5 814L814.5 820.5M814.5 814L808.5 820.5" stroke="#e01818" stroke-width="2"/>
<path d="M824.3 821V811.5H833" stroke="#1060c8" stroke-width="2" fill="none"/><path d="M826.5 821V814H831" stroke="#1060c8" stroke-width="1" fill="none"/><path d="M820 817H822.5M830 809.5H832.5" stroke="#333" stroke-width="1.2"/><path d="M827 816H829" stroke="#e02020" stroke-width="1"/>
<circle cx="833.5" cy="814" r="2.8" fill="#d8ecff" stroke="#1070d0" stroke-width="1"/><path d="M832.5 817.5V820.5H834.5V817.5" fill="#fff" stroke="#333" stroke-width="0.9"/>
<path d="M841.5 814C843 812 845 812.5 846 815C847 817 849 818.5 851 816.5C852 815.5 853 813 855 812.5L856.5 810.5C854.5 809.5 852.5 810 851 811" fill="none" stroke="#222" stroke-width="1.1"/><ellipse cx="848.5" cy="817" rx="2.6" ry="1.8" fill="#c8e4f4" stroke="#333" stroke-width="0.8"/><ellipse cx="854.5" cy="816" rx="2.4" ry="1.8" fill="#c8e4f4" stroke="#333" stroke-width="0.8"/>
<circle cx="870" cy="814.5" r="2.8" fill="#d8ecff" stroke="#1070d0" stroke-width="1.1"/><path d="M869 818H871V819.8H869Z" fill="#444"/>
<path d="M884.5 815.5L888.5 813.5L892.5 815.5V819.5L888.5 821.5L884.5 819.5Z" fill="#5aaae0" stroke="#1a70c0" stroke-width="0.8"/><path d="M888 810.5C889.5 809 893 809 894.5 811L893 812.5" fill="none" stroke="#30a030" stroke-width="1.8"/>
<path d="M890.5 814.5L897 821M897 814.5L890.5 821" stroke="#e01818" stroke-width="2"/>
<rect x="905.8" y="810.8" width="8.4" height="9" fill="#e4e6ea" stroke="#1a1a1a" stroke-width="1.4"/><path d="M905.5 809.5V811M908 809.5V811M910.5 809.5V811M913 809.5V811M905.5 820V821.5M908 820V821.5M910.5 820V821.5" stroke="#222" stroke-width="0.9"/><rect x="913.8" y="813.3" width="5.6" height="6.2" rx="1" fill="#fff" stroke="#1a1a1a" stroke-width="1.2"/><circle cx="916.6" cy="816.4" r="1.2" fill="#1a1a1a"/>
<path d="M925 821V813L930 809.5H937M925 813H933M928 813V821M931 813V821M934 812V817M925 817H933M936 820H938" fill="none" stroke="#b8b8b8" stroke-width="1.1"/>
<path d="M946.5 808.5V812.5M961.5 808.5V812.5M946.5 810.5H961.5" stroke="#2a3040" stroke-width="1.1"/><path d="M946.5 813V820.5M947 816.5H953" stroke="#2a3040" stroke-width="1" stroke-dasharray="1.5 1.2"/><rect x="954.5" y="815.5" width="7" height="5" rx="0.8" fill="#5a5a5a"/><path d="M956 815.5V814C956 812.5 960 812.5 960 814V815.5" fill="none" stroke="#5a5a5a" stroke-width="1"/>
<path d="M976.5 812L972.5 815.5L976.5 819" stroke="#3a3a3a" stroke-width="1.8" fill="none"/>
</svg>
<div style="position:absolute;left:114px;top:392px;width:107px;height:18px;border:1px solid #000;border-right:2px solid #000;box-sizing:border-box;background:#fff"></div>
<span class="t" style="left:116px;top:393px">L7-050</span>
<div style="position:absolute;left:112px;top:408px;width:110px;height:20px;border:3px solid #f24545;box-sizing:border-box;background:linear-gradient(#d8d8d8,#f4f4f4 60%);box-shadow:2px 3px 4px rgba(0,0,0,0.35)"></div>
<span class="t" style="left:117px;top:411px">PREMIUM BED 5</span>
<div style="position:absolute;left:414px;top:155px;width:147px;height:25px;border:3px solid #f24545;box-sizing:border-box;box-shadow:2px 3px 4px rgba(0,0,0,0.35), inset 1px 1px 2px rgba(0,0,0,0.3)"></div>
<div style="position:absolute;left:540px;top:794px;width:80px;height:22px;border:3px solid #f24545;box-sizing:border-box;box-shadow:2px 3px 4px rgba(0,0,0,0.35), inset 1px 1px 3px rgba(0,0,0,0.35)"></div>
<svg style="position:absolute;left:0;top:0" width="1017" height="827" viewBox="0 0 1017 827"><defs><filter id="sh" x="-20%" y="-20%" width="140%" height="140%"><feGaussianBlur in="SourceAlpha" stdDeviation="1.5"/><feOffset dx="2" dy="3"/><feComponentTransfer><feFuncA type="linear" slope="0.4"/></feComponentTransfer><feMerge><feMergeNode/><feMergeNode in="SourceGraphic"/></feMerge></filter></defs><g filter="url(#sh)"><path d="M407.5 167L233 410" stroke="#f44646" stroke-width="3.9" stroke-linecap="round"/><path d="M226 420L228.5 406L238 413.5Z" fill="#f44646"/></g></svg>
<div style="position:absolute;left:0;top:825px;width:1017px;height:2px;background:#959595"></div>
</body></html>
